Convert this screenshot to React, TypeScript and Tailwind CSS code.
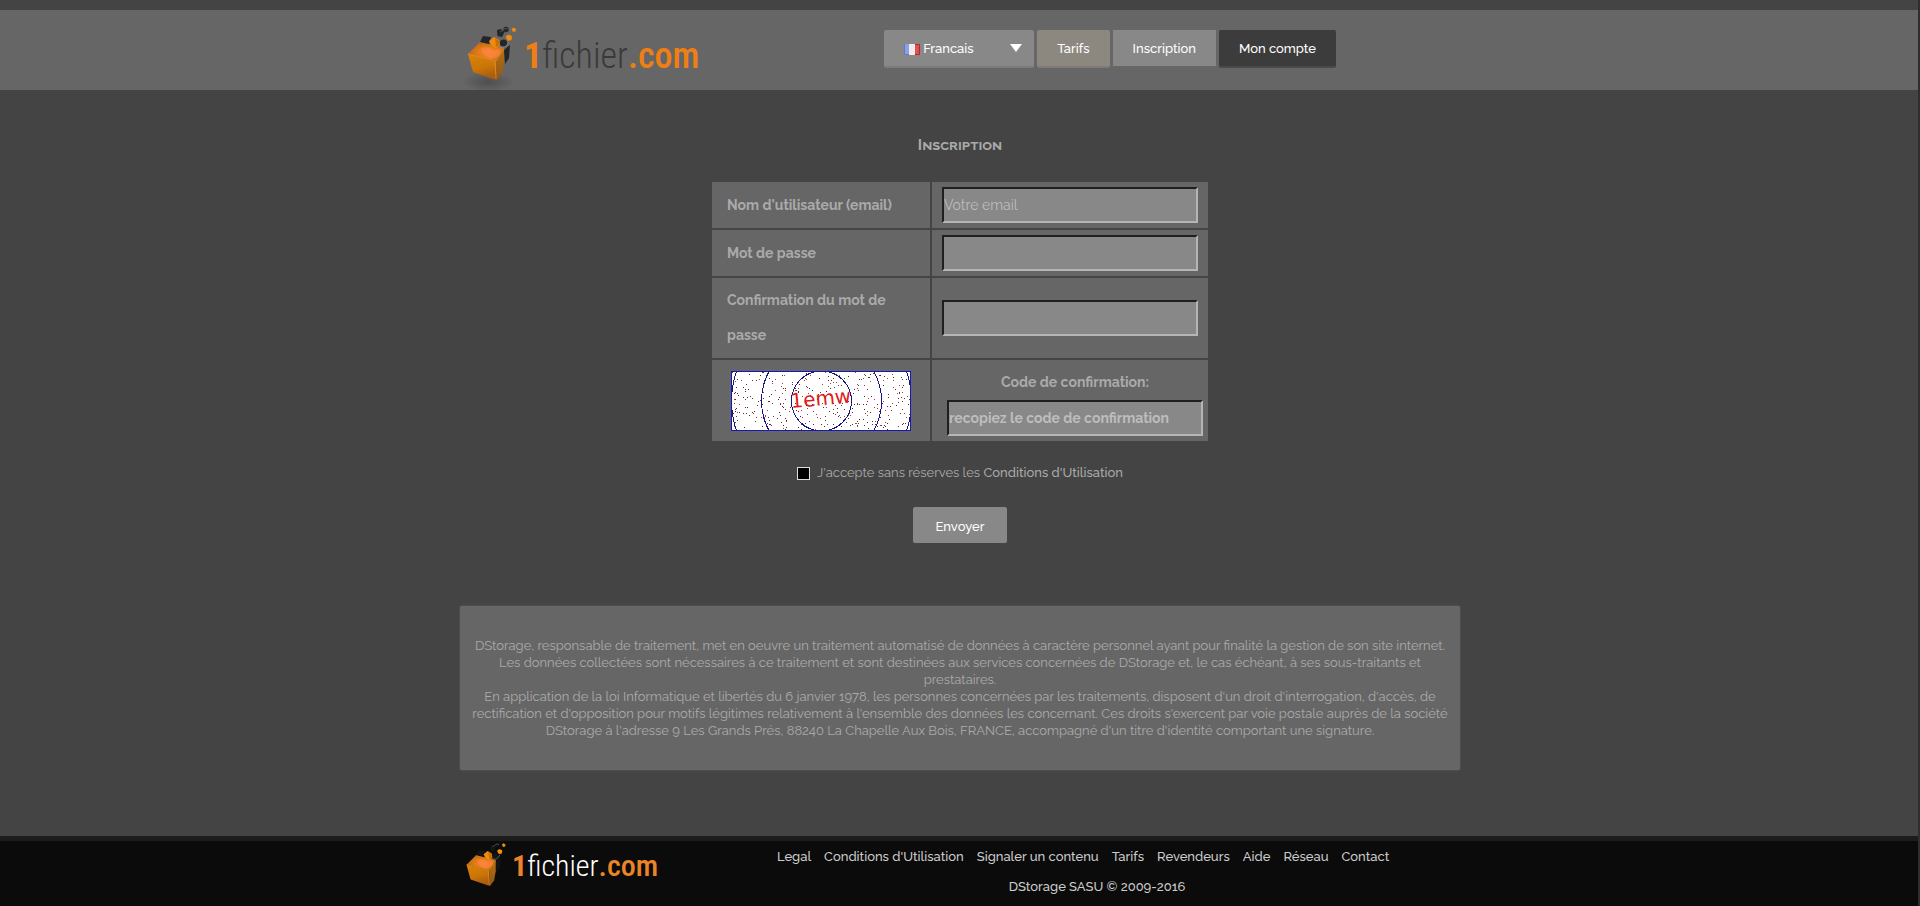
import React, { useId } from "react";

const footerLinks = [
  "Legal",
  "Conditions d'Utilisation",
  "Signaler un contenu",
  "Tarifs",
  "Revendeurs",
  "Aide",
  "Réseau",
  "Contact",
];

const fieldClass =
  "block h-9 w-full border-2 border-t-[#1f1f1f] border-l-[#1f1f1f] border-r-[#b5b5b5] border-b-[#b5b5b5] bg-[#888] text-sm text-white outline-none placeholder:text-[#bdbdbd]";

function BoxMark({ className, dark }: { className: string; dark: boolean }) {
  const id = useId();
  const cube = dark ? "#141414" : "#232527";
  return (
    <svg className={className} viewBox="0 0 64 76" aria-hidden="true">
      <defs>
        <linearGradient id={id + "l"} x1="0" y1="0" x2="0.3" y2="1">
          <stop offset="0" stopColor="#dc8205" />
          <stop offset="0.6" stopColor="#cc7608" />
          <stop offset="1" stopColor="#a95d0e" />
        </linearGradient>
        <linearGradient id={id + "r"} x1="0" y1="0" x2="0" y2="1">
          <stop offset="0" stopColor="#b9720f" />
          <stop offset="1" stopColor="#94550f" />
        </linearGradient>
        <radialGradient id={id + "t"} cx="0.58" cy="0.55" r="0.6">
          <stop offset="0" stopColor="#fb8636" />
          <stop offset="0.45" stopColor="#e67c18" />
          <stop offset="1" stopColor="#b56a12" />
        </radialGradient>
        <radialGradient id={id + "s"}>
          <stop offset="0" stopColor="#222" stopOpacity="0.35" />
          <stop offset="1" stopColor="#222" stopOpacity="0" />
        </radialGradient>
      </defs>
      {!dark && <ellipse cx="28" cy="62" rx="26" ry="10" fill={`url(#${id}s)`} />}
      <path d="M44 30 L50 25 L49 38 L45 44Z" fill={cube} />
      <path d="M8 34 L20 22 L44 28 L36 41Z" fill={`url(#${id}t)`} />
      <path d="M8 34 L36 41 L37 60 L33 59 L13 52Z" fill={`url(#${id}l)`} />
      <path d="M36 41 L44 28 L44 42 L42 53 L37 60Z" fill={`url(#${id}r)`} />
      <path d="M8 34 L36 41 L44 29" fill="none" stroke="#f3a84c" strokeWidth="0.7" opacity="0.6" />
      <path d="M35 42 L36 58" stroke="#e9a64b" strokeWidth="0.8" opacity="0.7" />
      <path d="M21 28 Q30 26 34 31 Q40 27 41 32 Q39 38 30 39 Q22 35 21 28Z" fill="#ff8545" opacity="0.6" />
      <path d="M23 16 L31 17 L29 24 L20 22Z" fill={cube} />
      <path d="M29 21 L34 17 L39 20 L40 25 L36 28 L31 25Z" fill="#f08c0c" />
      <path d="M35 18 L39 21 L39 25 L36 27Z" fill="#c96c06" />
      <circle cx="43.500" cy="23" r="3.600" fill={cube} />
      <path d="M39 26 Q45 30 49 22" fill="none" stroke="#8b8b8b" strokeWidth="0.8" />
      <path d="M45.500 17 L48 14.500 L52 16 L51.500 20 L48 21Z" fill="#ee8d10" />
      <path d="M37 10 L41 9 L44.500 12 L42 17 L37.500 16Z" fill={cube} />
      <circle cx="46" cy="9.500" r="2.700" fill={cube} />
      <path d="M40 12 L45 8.500 L48 9" fill="none" stroke="#59626b" strokeWidth="0.8" />
      <path d="M51.500 9 L53.500 7.500 L56 9 L55.500 11.500 L53 12Z" fill="#ee8d10" />
    </svg>
  );
}

function Flag() {
  return (
    <svg className="pointer-events-none absolute left-5 top-3.5 h-[11px] w-4" viewBox="0 0 16 11" aria-hidden="true">
      <rect width="5" height="11" fill="#8ba0e6" />
      <rect x="5" width="6" height="11" fill="#ececec" />
      <rect x="11" width="5" height="11" fill="#e0524f" />
      <path d="M0.500 0V10.500H5" fill="none" stroke="#6478c8" />
      <path d="M11 0.500H15.500V10.500H11" fill="none" stroke="#b32826" />
    </svg>
  );
}

function makeSpecks(count: number) {
  let seed = 4217;
  const next = () => {
    seed = (seed * 16807) % 2147483647;
    return seed / 2147483647;
  };
  return Array.from({ length: count }, () => ({
    x: 1 + Math.floor(next() * 178),
    y: 1 + Math.floor(next() * 58),
    tone: Math.floor(next() * 3),
  }));
}

const specks = makeSpecks(360);
const tones = ["#6a2020", "#b03a3a", "#4a3a3a"];

function Captcha() {
  return (
    <svg className="block h-[60px] w-[180px]" viewBox="0 0 180 60" role="img" aria-label="1emw">
      <rect width="180" height="60" fill="#fff" />
      <g fill="none" stroke="#14148c" shapeRendering="crispEdges">
        <circle cx="90.500" cy="30" r="30" />
        <circle cx="90.500" cy="30" r="60" />
        <circle cx="90.500" cy="30" r="90" />
      </g>
      <g shapeRendering="crispEdges">
        {specks.map((s, i) => (
          <rect key={i} x={s.x} y={s.y} width="1" height="1" fill={tones[s.tone]} />
        ))}
      </g>
      <text x="60" y="37" transform="rotate(-5 60 37)" fill="#e01b1b" className="font-['DejaVu_Sans',sans-serif] text-[20px]">
        1emw
      </text>
      <rect x="0.500" y="0.500" width="179" height="59" fill="none" stroke="#1818b4" />
    </svg>
  );
}

export default function App() {
  return (
    <div className="relative flex min-h-screen flex-col bg-[#444] font-['Raleway','Open_Sans',sans-serif] text-[13px] text-[#aaa] after:absolute after:inset-y-0 after:right-0 after:w-0.5 after:bg-[#2e2e2e]">
      <header className="mt-2.5 bg-[#666]">
        <div className="mx-auto flex h-20 w-full max-w-[1000px] items-start">
          <a href="#accueil" className="flex items-start" aria-label="1fichier.com">
            <BoxMark className="mt-2.5 h-[76px] w-16" dark={false} />
            <span className="mt-[21px] flex items-baseline font-['Roboto_Condensed','Roboto',sans-serif] text-4xl leading-[50px]">
              <span className="font-bold text-[#f07f13]">1</span>
              <span className="font-light text-[#3a3a3a]">fichier</span>
              <span className="font-medium text-[#f07f13]">.com</span>
            </span>
          </a>
          <nav className="mr-[124px] ml-auto mt-5 flex items-start gap-[3px] font-medium text-white">
            <div className="relative">
              <select
                aria-label="Langue"
                className="h-[38px] w-[150px] appearance-none rounded-xs border-b-2 border-[#7c7c7c] bg-[#888] pt-0.5 pl-[39px] text-white outline-none"
              >
                <option>Francais</option>
              </select>
              <Flag />
              <svg className="pointer-events-none absolute right-3 top-3.5 h-2 w-3" viewBox="0 0 12 8" aria-hidden="true">
                <path d="M0 0H12L6 8Z" fill="#fff" />
              </svg>
            </div>
            <a href="#tarifs" className="h-[38px] rounded-xs border-b-2 border-[#7f7b74] bg-[#8c8880] px-5 leading-[38px]">
              Tarifs
            </a>
            <a href="#inscription" className="h-9 bg-[#888] px-5 leading-[38px]">
              Inscription
            </a>
            <a href="#compte" className="h-[38px] rounded-xs border-b-2 border-[#4a4a4a] bg-[#3c3c3c] px-5 leading-[38px]">
              Mon compte
            </a>
          </nav>
        </div>
      </header>

      <main className="mx-auto flex w-full max-w-[1000px] flex-col items-center">
        <h1 className="mt-[38px] text-[15px] font-bold leading-[35px] [font-variant:small-caps]">Inscription</h1>
        <form className="mt-[17px] flex flex-col items-center" onSubmit={(e) => e.preventDefault()}>
          <table className="w-[500px] table-fixed border-separate border-spacing-0.5 text-sm leading-[35px]">
            <colgroup>
              <col className="w-[218px]" />
              <col />
            </colgroup>
            <tbody>
              <tr>
                <th className="bg-[#666] py-[5px] pr-2.5 pl-[15px] text-left font-bold">
                  <label htmlFor="mail">Nom d'utilisateur (email)</label>
                </th>
                <td className="bg-[#666] px-2.5 py-[5px]">
                  <input id="mail" type="email" placeholder="Votre email" className={fieldClass} />
                </td>
              </tr>
              <tr>
                <th className="bg-[#666] py-[5px] pr-2.5 pl-[15px] text-left font-bold">
                  <label htmlFor="pass">Mot de passe</label>
                </th>
                <td className="bg-[#666] px-2.5 py-[5px]">
                  <input id="pass" type="password" className={fieldClass} />
                </td>
              </tr>
              <tr>
                <th className="bg-[#666] py-[5px] pr-2.5 pl-[15px] text-left font-bold">
                  <label htmlFor="pass2">Confirmation du mot de passe</label>
                </th>
                <td className="bg-[#666] px-2.5 py-[5px]">
                  <input id="pass2" type="password" className={fieldClass} />
                </td>
              </tr>
              <tr>
                <td className="bg-[#666] pl-[19px]">
                  <Captcha />
                </td>
                <th className="bg-[#666] py-[5px] pr-[5px] pl-[15px] text-center font-bold">
                  <label htmlFor="code" className="block">
                    Code de confirmation:
                  </label>
                  <input id="code" type="text" placeholder="recopiez le code de confirmation" className={fieldClass} />
                </th>
              </tr>
            </tbody>
          </table>
          <div className="mt-5 flex items-center gap-[7px] leading-5">
            <input
              id="cgu"
              type="checkbox"
              className="mt-px h-[13px] w-[13px] appearance-none border border-[#ddd] bg-black checked:bg-[#f07f13]"
            />
            <label htmlFor="cgu">
              J'accepte sans réserves les{" "}
              <a href="#conditions" className="font-medium">
                Conditions d'Utilisation
              </a>
            </label>
          </div>
          <button type="submit" className="mt-6 h-9 rounded-xs bg-[#888] px-[23px] pt-[3px] font-medium text-white">
            Envoyer
          </button>
        </form>

        <section className="mt-[63px] mb-[66px] w-full rounded-xs bg-[#666] px-2.5 pt-[31px] pb-[31px] text-center leading-[17px] shadow-[0_0_2px_#666]">
          <p>
            DStorage, responsable de traitement, met en oeuvre un traitement automatisé de données à caractère personnel
            ayant pour finalité la gestion de son site internet.
          </p>
          <p>
            Les données collectées sont nécessaires à ce traitement et sont destinées aux services concernées de
            DStorage et, le cas échéant, à ses sous-traitants et prestataires.
          </p>
          <p>
            En application de la loi Informatique et libertés du 6 janvier 1978, les personnes concernées par les
            traitements, disposent d'un droit d'interrogation, d'accès, de rectification et d'opposition pour motifs
            légitimes relativement à l'ensemble des données les concernant. Ces droits s'exercent par voie postale auprès
            de la société DStorage à l'adresse 9 Les Grands Prés, 88240 La Chapelle Aux Bois, FRANCE, accompagné d'un
            titre d'identité comportant une signature.
          </p>
        </section>
      </main>

      <footer className="grow border-t-[5px] border-[#1c1c1c] bg-[#0b0b0b] font-medium text-[#ccc]">
        <div className="mx-auto flex w-full max-w-[1000px] items-start">
          <a href="#accueil" className="flex items-start" aria-label="1fichier.com">
            <BoxMark className="-mt-1 h-[62px] w-[52px]" dark />
            <span className="flex items-baseline font-['Roboto_Condensed','Roboto',sans-serif] text-[30px] leading-[50px]">
              <span className="font-bold text-[#ec8427]">1</span>
              <span className="font-light text-white">fichier</span>
              <span className="font-medium text-[#ec8427]">.com</span>
            </span>
          </a>
          <div className="flex grow flex-col items-center pt-px pl-12 leading-[30px]">
            <ul className="flex gap-[13px]">
              {footerLinks.map((name) => (
                <li key={name}>
                  <a href="#">{name}</a>
                </li>
              ))}
            </ul>
            <p className="pl-7">DStorage SASU © 2009-2016</p>
          </div>
        </div>
      </footer>
    </div>
  );
}
